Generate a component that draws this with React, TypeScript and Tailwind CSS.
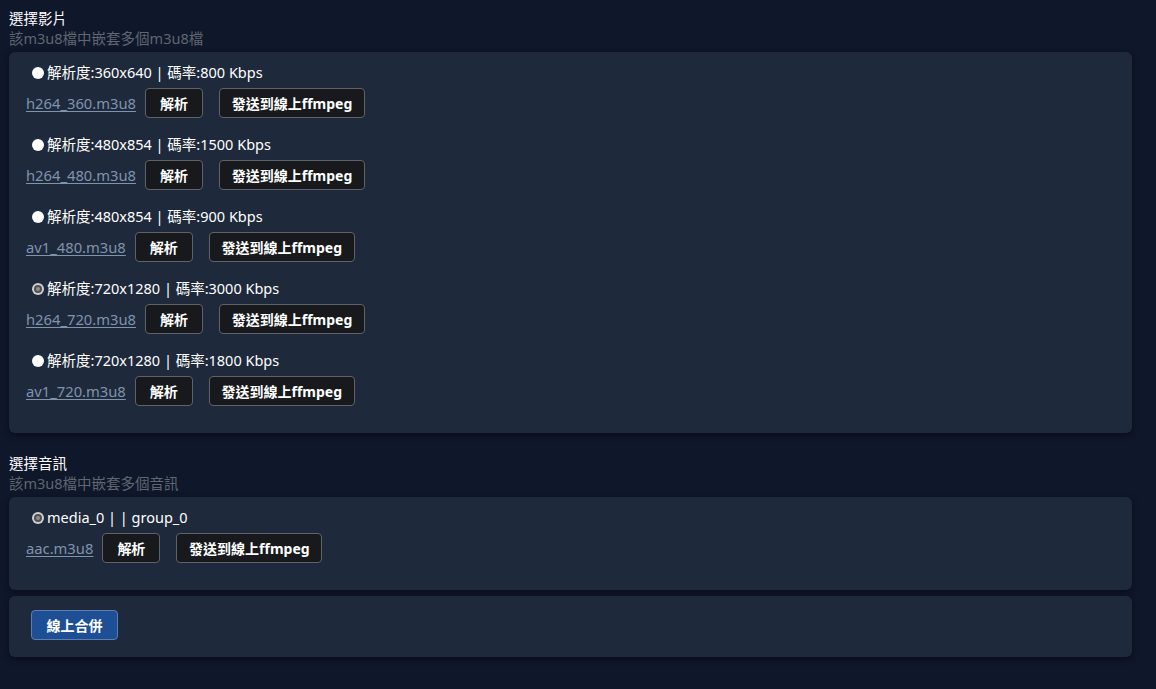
import React from "react";

type Stream = {
  label: string;
  file: string;
  checked?: boolean;
};

const videos: Stream[] = [
  { label: "解析度:360x640 | 碼率:800 Kbps", file: "h264_360.m3u8" },
  { label: "解析度:480x854 | 碼率:1500 Kbps", file: "h264_480.m3u8" },
  { label: "解析度:480x854 | 碼率:900 Kbps", file: "av1_480.m3u8" },
  { label: "解析度:720x1280 | 碼率:3000 Kbps", file: "h264_720.m3u8", checked: true },
  { label: "解析度:720x1280 | 碼率:1800 Kbps", file: "av1_720.m3u8" },
];

const audios: Stream[] = [{ label: "media_0 | | group_0", file: "aac.m3u8", checked: true }];

const Radio = ({ checked }: { checked?: boolean }) =>
  checked ? (
    <span className="flex h-3 w-3 items-center justify-center rounded-full bg-[#cfcfcf]">
      <span className="flex h-2 w-2 items-center justify-center rounded-full bg-[#505050]">
        <span className="h-1 w-1 rounded-full bg-[#8f8f8f]" />
      </span>
    </span>
  ) : (
    <span className="h-3 w-3 rounded-full bg-white" />
  );

const DarkButton = ({ children, className = "" }: { children: React.ReactNode; className?: string }) => (
  <button
    type="button"
    className={`flex h-[30px] items-center justify-center rounded-[4px] border border-[#5f6368] bg-[#17191c] text-[14px] font-bold text-white ${className}`}
  >
    {children}
  </button>
);

const StreamItem = ({ item }: { item: Stream }) => (
  <div className="mb-[17px]">
    <label className="flex h-5 items-center pl-[6px] text-white">
      <Radio checked={item.checked} />
      <span className="ml-[3px]">{item.label}</span>
    </label>
    <div className="mt-[5px] flex h-[30px] items-center">
      <a href="#" className="text-[14.75px] text-[#8093ad] underline underline-offset-2">
        {item.file}
      </a>
      <DarkButton className="ml-[9px] w-[58px]">解析</DarkButton>
      <DarkButton className="ml-4 w-[146px]">發送到線上ffmpeg</DarkButton>
    </div>
  </div>
);

const Section = ({ title, hint, items }: { title: string; hint: string; items: Stream[] }) => (
  <section>
    <div className="h-5 leading-5 text-white">{title}</div>
    <div className="h-5 leading-5 text-[#5f6670]">{hint}</div>
    <div className="mt-1 rounded-md bg-[#1e293b] px-[17px] pt-[11px] pb-[10px] shadow-[0_2px_6px_rgba(0,0,0,0.45)]">
      {items.map((item) => (
        <StreamItem key={item.file} item={item} />
      ))}
    </div>
  </section>
);

export default function App() {
  return (
    <div
      className="min-h-[689px] bg-[#0f172a] pt-2 pr-6 pb-8 pl-[9px] text-[14.5px]"
      style={{ fontFamily: '"Noto Sans", "Noto Sans CJK TC", sans-serif' }}
    >
      <Section title="選擇影片" hint="該m3u8檔中嵌套多個m3u8檔" items={videos} />
      <div className="mt-[20px]">
        <Section title="選擇音訊" hint="該m3u8檔中嵌套多個音訊" items={audios} />
      </div>
      <div className="mt-[6px] rounded-md bg-[#1e293b] px-[22px] pt-[14px] pb-[17px] shadow-[0_2px_6px_rgba(0,0,0,0.45)]">
        <button
          type="button"
          className="h-[30px] w-[87px] rounded-[4px] border border-[#5b7fb3] bg-[#1e4f95] text-[14px] font-bold text-white"
        >
          線上合併
        </button>
      </div>
    </div>
  );
}
